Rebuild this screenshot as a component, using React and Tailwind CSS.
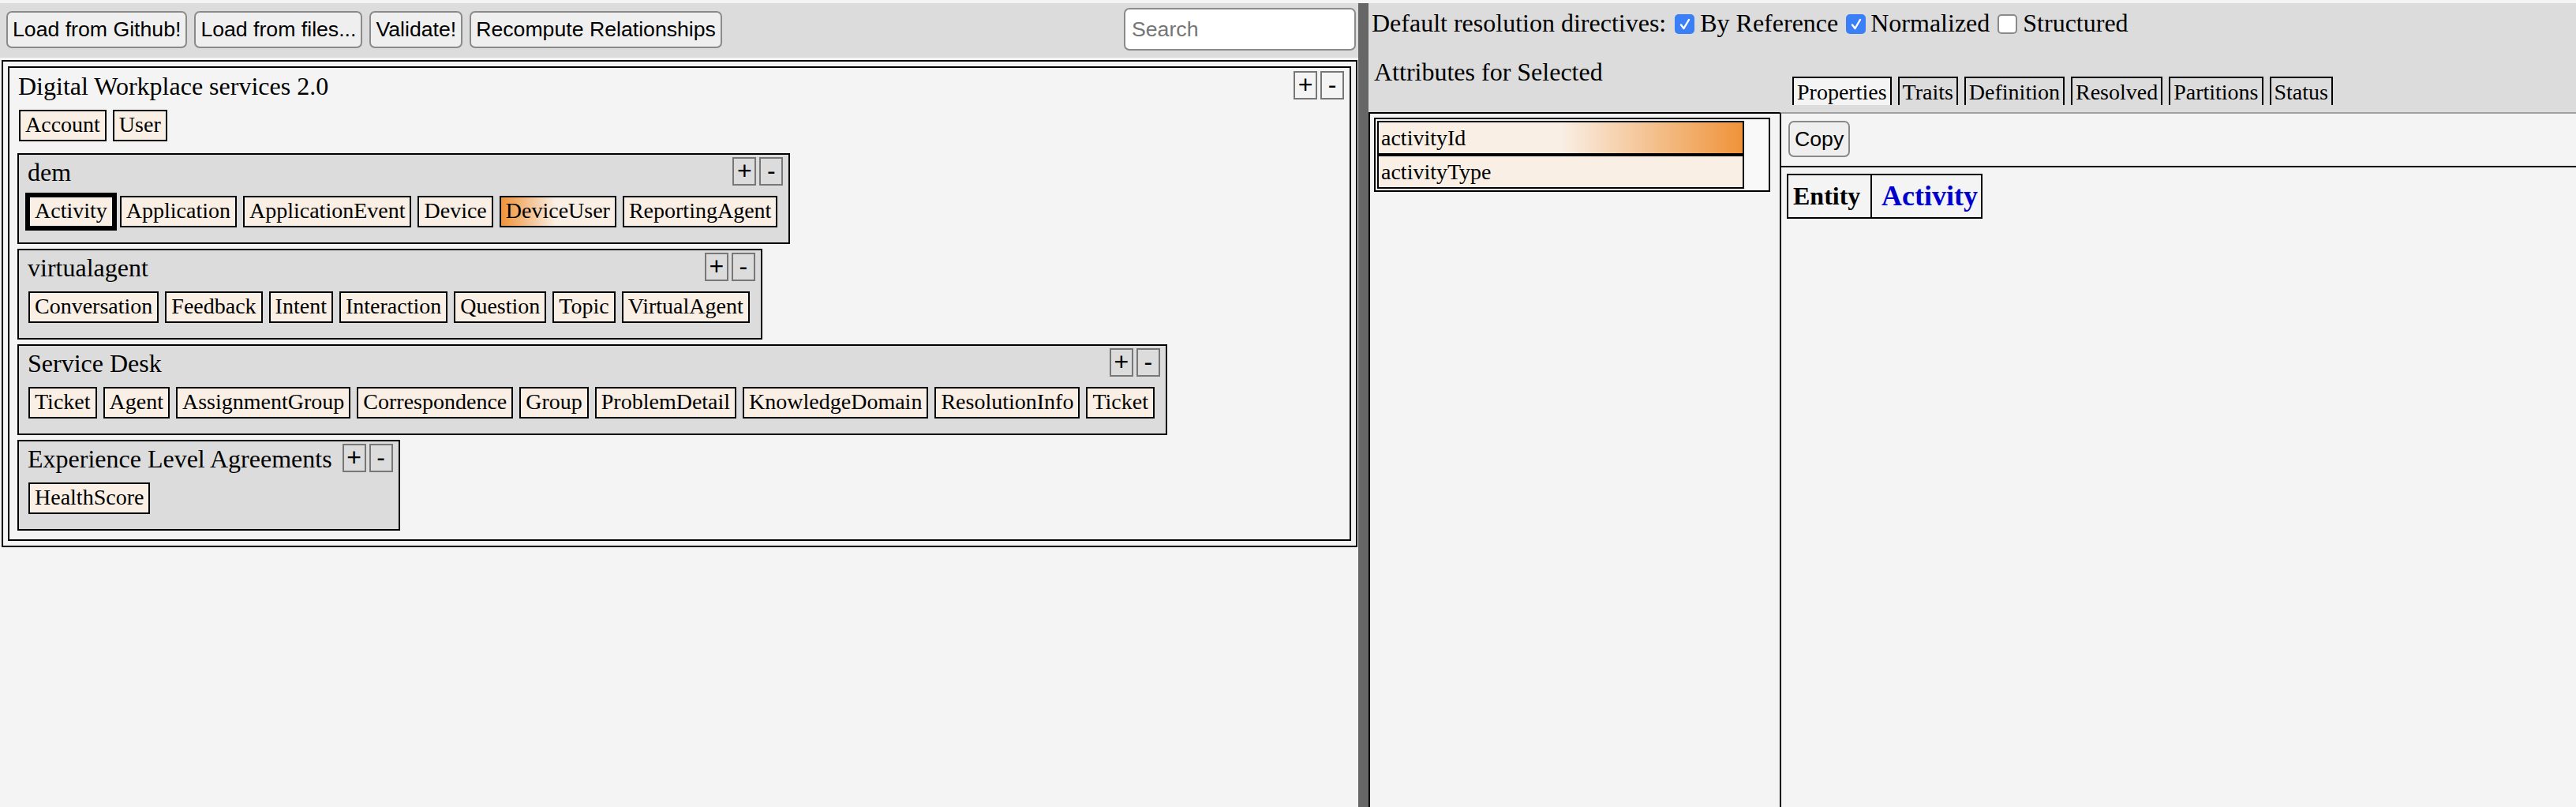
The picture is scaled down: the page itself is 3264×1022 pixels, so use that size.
import React from "react";

const GROUPS = [
  {
    name: "dem",
    entities: ["Activity", "Application", "ApplicationEvent", "Device", "DeviceUser", "ReportingAgent"],
  },
  {
    name: "virtualagent",
    entities: ["Conversation", "Feedback", "Intent", "Interaction", "Question", "Topic", "VirtualAgent"],
  },
  {
    name: "Service Desk",
    entities: [
      "Ticket",
      "Agent",
      "AssignmentGroup",
      "Correspondence",
      "Group",
      "ProblemDetail",
      "KnowledgeDomain",
      "ResolutionInfo",
      "Ticket",
    ],
  },
  { name: "Experience Level Agreements", entities: ["HealthScore"] },
];

const TABS = ["Properties", "Traits", "Definition", "Resolved", "Partitions", "Status"];

function PlusMinus() {
  return (
    <div className="flex gap-[4px] shrink-0 font-['Liberation_Sans',Arial,sans-serif]">
      {["+", "-"].map((s) => (
        <span
          key={s}
          className="w-[30px] h-[36px] border-2 border-[#777] flex items-center justify-center text-[32px] leading-none pb-[2px]"
        >
          {s}
        </span>
      ))}
    </div>
  );
}

function Entity({ name, selected, hot }) {
  return (
    <span
      className={`h-[40px] border-2 border-black px-[6px] text-[28px] leading-[34px] whitespace-nowrap ${
        selected ? "ring-4 ring-black" : ""
      } ${hot ? "bg-[linear-gradient(to_right,#ef9339,#f9efe5_48%)]" : "bg-[#f9efe5]"}`}
    >
      {name}
    </span>
  );
}

function Group({ title, entities, main, children }) {
  return (
    <div
      className={`border-2 border-black pl-[10px] pr-[7px] ${
        main ? "pt-[4px] pb-[11px]" : "w-fit bg-[#dcdcdc] pt-[3px] pb-[19px]"
      }`}
    >
      <div className="h-[36px] flex items-start justify-between gap-[13px] pl-[1px]">
        <span
          className={`text-[32px] whitespace-nowrap ${
            main ? "leading-[33px] mt-[3px]" : "leading-[34px] mt-[2px]"
          }`}
        >
          {title}
        </span>
        <PlusMinus />
      </div>
      <div className="flex gap-[8px] mt-[13px] pl-[2px] mr-[7px]">
        {entities.map((e, i) => (
          <Entity key={e + i} name={e} selected={e === "Activity"} hot={e === "DeviceUser"} />
        ))}
      </div>
      {children}
    </div>
  );
}

function Checkbox({ checked }) {
  if (!checked)
    return <span className="block w-[25px] h-[25px] rounded-[5px] border-2 border-[#8a8a8a] bg-white" />;
  return (
    <span className="w-[25px] h-[25px] rounded-[5px] bg-[#3b7ff6] flex items-center justify-center">
      <svg width="16" height="18" viewBox="0 0 16 18">
        <path d="M3 9.5 L6.5 14 L13 3" fill="none" stroke="white" strokeWidth="2.4" strokeLinecap="round" strokeLinejoin="round" />
      </svg>
    </span>
  );
}

export default function App() {
  return (
    <div className="flex h-screen w-full pt-[4px] bg-[#f4f4f4] text-black font-['Liberation_Serif',serif] overflow-hidden">
      {/* Left: schema groups */}
      <div className="w-[1721px] shrink-0 flex flex-col">
        <div className="h-[69px] bg-[#dcdcdc] flex items-start pl-[8px] pr-[3px] font-['Liberation_Sans',Arial,sans-serif]">
          <div className="flex gap-[9px] mt-[10px]">
            {["Load from Github!", "Load from files...", "Validate!", "Recompute Relationships"].map((b) => (
              <button
                key={b}
                className="h-[47px] px-[6px] border-2 border-[#8a8a8a] rounded-[7px] bg-[#efefef] text-[26.67px] leading-none whitespace-nowrap"
              >
                {b}
              </button>
            ))}
          </div>
          <input
            placeholder="Search"
            className="ml-auto mt-[6px] w-[294px] h-[54px] bg-white border-2 border-[#8a8a8a] rounded-[7px] px-[8px] text-[26.67px] placeholder:text-[#757575] outline-none"
          />
        </div>

        <div className="mt-[3px] ml-[2px] w-[1718px] border-2 border-black p-[6px]">
          <Group main title="Digital Workplace services 2.0" entities={["Account", "User"]}>
            <div className="flex flex-col items-start gap-[6px] mt-[15px]">
              {GROUPS.map((g) => (
                <Group key={g.name} title={g.name} entities={g.entities} />
              ))}
            </div>
          </Group>
        </div>
      </div>

      {/* Divider */}
      <div className="w-[13px] shrink-0 bg-[#666]" />

      {/* Right: details */}
      <div className="flex-1 flex flex-col min-w-0">
        <div className="h-[138px] bg-[#dcdcdc] flex flex-col">
          <div className="h-[44px] pt-[5px] pl-[4px] flex items-start text-[32px] leading-[40px] whitespace-nowrap">
            <span>Default resolution directives:</span>
            <span className="ml-[11px] mt-[9px]">
              <Checkbox checked />
            </span>
            <span className="ml-[7px]">By Reference</span>
            <span className="ml-[10px] mt-[9px]">
              <Checkbox checked />
            </span>
            <span className="ml-[6px]">Normalized</span>
            <span className="ml-[10px] mt-[9px]">
              <Checkbox />
            </span>
            <span className="ml-[7px]">Structured</span>
          </div>
          <div className="flex flex-1">
            <div className="w-[521px] shrink-0 pl-[7px] pt-[23px] text-[32px] leading-[40px]">Attributes for Selected</div>
            <div className="flex items-end gap-[8px] pl-[16px] pb-[9px]">
              {TABS.map((t, i) => (
                <span
                  key={t}
                  className={`h-[36px] border-2 border-b-0 border-black px-[4px] pt-[2px] text-[28px] leading-[32px] ${
                    i === 0 ? "bg-[#f4f4f4]" : ""
                  }`}
                >
                  {t}
                </span>
              ))}
            </div>
          </div>
        </div>

        <div className="flex flex-1 min-h-0">
          <div className="w-[521px] shrink-0 border-l-2 border-t-2 border-black pl-[5px] pt-[5px]">
            <div className="w-[502px] border-2 border-black bg-[#f9f9f9] p-[2px]">
              <div className="w-[465px] h-[43px] border-2 border-black pl-[3px] text-[28px] leading-[39px] bg-[linear-gradient(to_right,#f9efe5_50%,#ef9339)]">
                activityId
              </div>
              <div className="w-[465px] h-[43px] border-2 border-black pl-[3px] text-[28px] leading-[39px] bg-[#f9efe5]">
                activityType
              </div>
            </div>
          </div>

          <div className="flex-1 border-l-2 border-black border-t-2 border-t-[#a0a0a0]">
            <div className="h-[68px] border-b-2 border-black pl-[9px] pt-[9px]">
              <button className="h-[46px] px-[6px] border-2 border-[#8a8a8a] rounded-[7px] bg-[#efefef] text-[26.67px] leading-none font-['Liberation_Sans',Arial,sans-serif]">
                Copy
              </button>
            </div>
            <div className="ml-[7px] mt-[8px] w-fit flex border-2 border-black h-[57px]">
              <div className="w-[106px] border-r-2 border-black pl-[6px] text-[32px] font-bold leading-[53px]">Entity</div>
              <div className="w-[138px] pl-[12px] text-[36px] font-bold leading-[53px] text-[#0000cc]">Activity</div>
            </div>
          </div>
        </div>
      </div>
    </div>
  );
}
